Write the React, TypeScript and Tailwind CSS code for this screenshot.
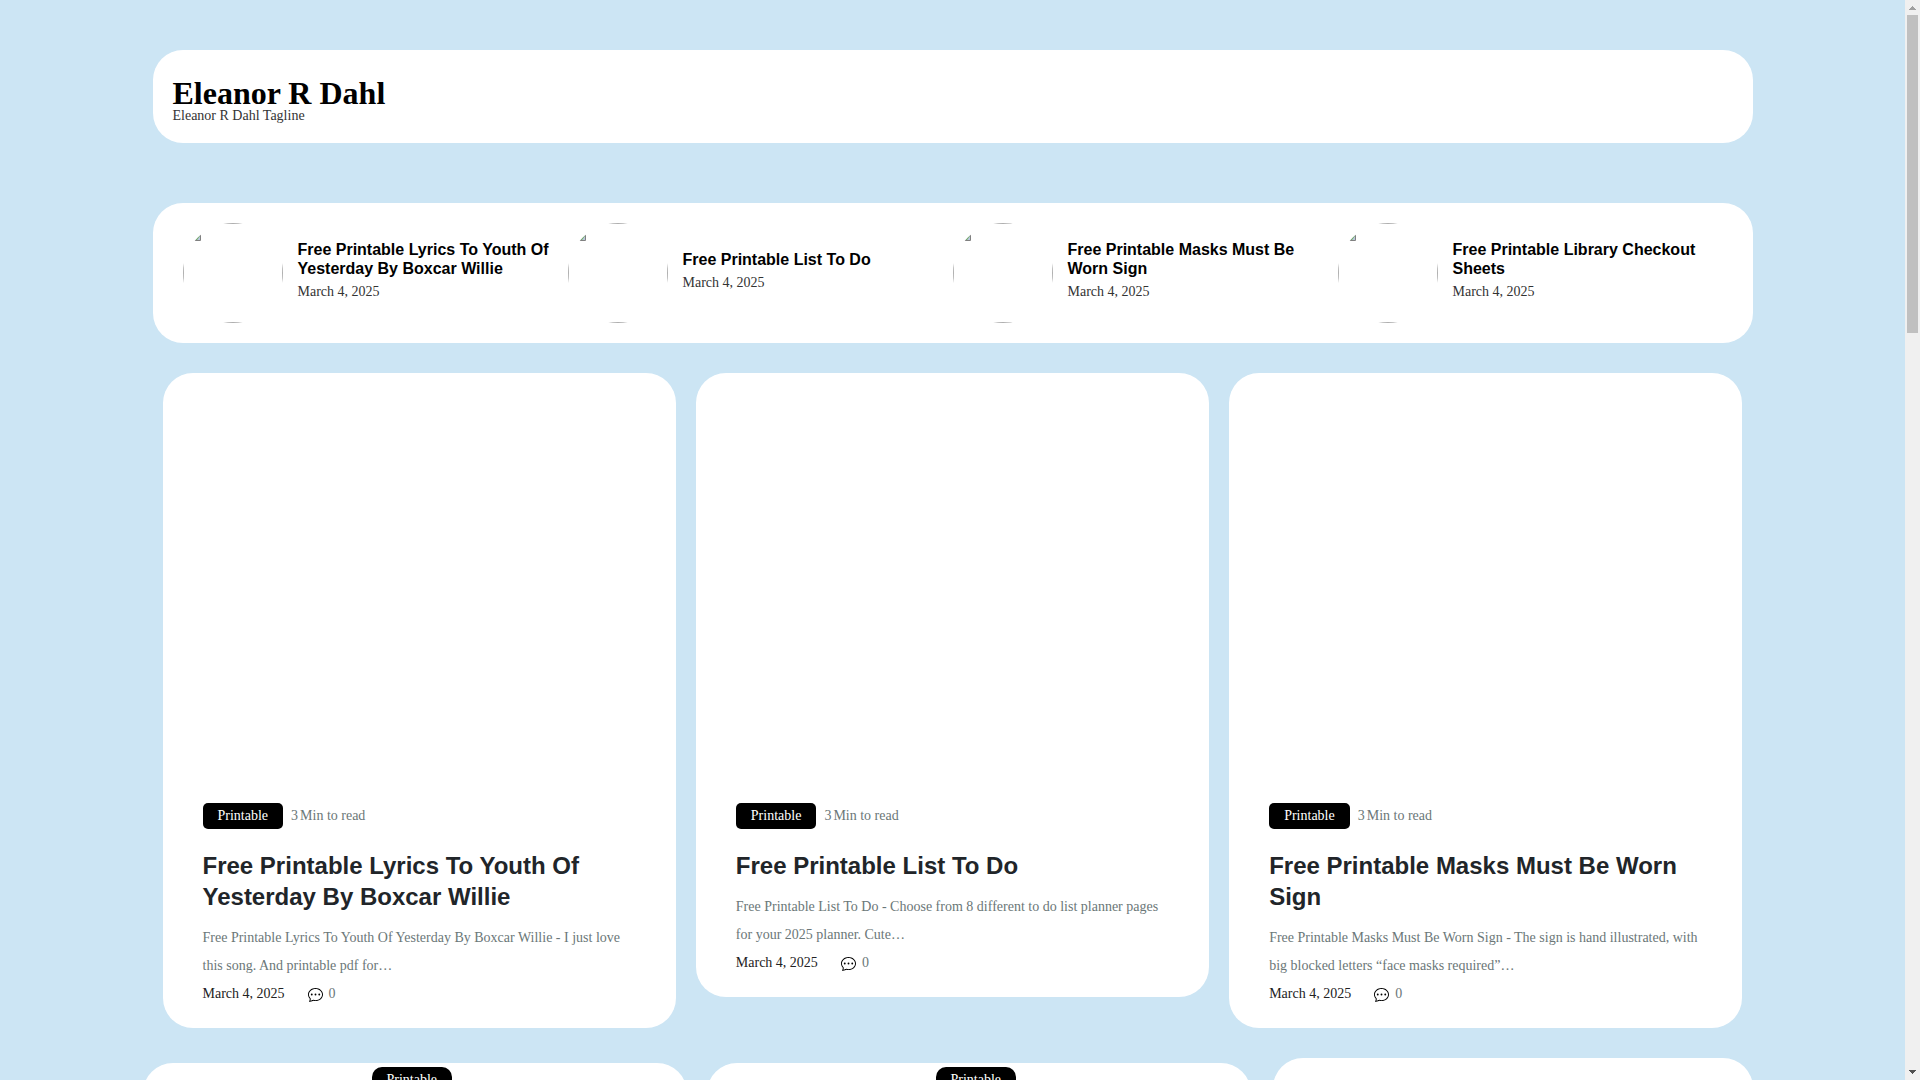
import { BsChatDots } from "react-icons/bs";

interface Post {
  title: string;
  excerpt: string;
}

const DATE = "March 4, 2025";

const recent = [
  "Free Printable Lyrics To Youth Of Yesterday By Boxcar Willie",
  "Free Printable List To Do",
  "Free Printable Masks Must Be Worn Sign",
  "Free Printable Library Checkout Sheets",
];

const posts: Post[] = [
  {
    title: "Free Printable Lyrics To Youth Of Yesterday By Boxcar Willie",
    excerpt:
      "Free Printable Lyrics To Youth Of Yesterday By Boxcar Willie - I just love this song. And printable pdf for…",
  },
  {
    title: "Free Printable List To Do",
    excerpt:
      "Free Printable List To Do - Choose from 8 different to do list planner pages for your 2025 planner. Cute…",
  },
  {
    title: "Free Printable Masks Must Be Worn Sign",
    excerpt:
      "Free Printable Masks Must Be Worn Sign - The sign is hand illustrated, with big blocked letters “face masks required”…",
  },
];

export default function App() {
  return (
    <div className="flex h-screen overflow-hidden bg-[#cce5f4] font-['Liberation_Serif',serif] text-sm">
      <div className="min-w-0 flex-1 overflow-hidden">
        <div className="mx-auto w-full max-w-[1600px] pt-[50px]">
          <header className="rounded-[30px] bg-white px-5 pt-[27px] pb-5">
            <h1 className="text-[32px] leading-8 font-bold text-black">
              <a href="#">Eleanor R Dahl</a>
            </h1>
            <p className="leading-[14px] text-[#333333]">Eleanor R Dahl Tagline</p>
          </header>

          <section className="mt-[60px] grid grid-cols-4 rounded-[30px] bg-white px-[30px] py-5">
            {recent.map((title) => (
              <RecentPost key={title} title={title} />
            ))}
          </section>

          <section className="mt-[30px] grid grid-cols-3 items-start gap-5 px-[10px]">
            {posts.map((post) => (
              <PostCard key={post.title} post={post} />
            ))}
          </section>

          <div className="mt-[30px] flex items-start gap-[22px]">
            <div className="-ml-[10px] grid min-w-0 flex-1 grid-cols-2 gap-5 pt-[5px]">
              <SlideCard />
              <SlideCard />
            </div>
            <aside className="h-[600px] w-[30%] rounded-[30px] bg-white" />
          </div>
        </div>
      </div>
      <Scrollbar />
    </div>
  );
}

function RecentPost({ title }: { title: string }) {
  return (
    <article className="flex items-center gap-[15px]">
      <Thumbnail />
      <div className="min-w-0 flex-1">
        <h2 className="font-['Liberation_Sans',sans-serif] text-base leading-[19px] font-bold text-black">
          <a href="#">{title}</a>
        </h2>
        <p className="leading-7 text-[#333333]">{DATE}</p>
      </div>
    </article>
  );
}

// Square outline clipped to a circle, with the missing-picture icon in its corner
function Thumbnail() {
  return (
    <div className="size-[100px] shrink-0 overflow-hidden rounded-full">
      <div className="size-full border border-[#b0b0b0] p-px">
        <svg width="16" height="16" viewBox="0 0 16 16" aria-hidden="true">
          <path d="M1 1h10l4 4v10H1z" fill="#b9c6dc" />
          <path d="M2 15l7-5 2 1 4-2v2l-3 4z" fill="#6fa860" />
          <path d="M15.500 5v10.500H1" fill="none" stroke="#808080" />
        </svg>
      </div>
    </div>
  );
}

function PostCard({ post }: { post: Post }) {
  return (
    <article className="rounded-[30px] bg-white px-10 pb-5">
      <div className="h-[430px]" />
      <div className="flex items-center gap-2">
        <a href="#" className="rounded-[5px] bg-black px-[15px] leading-[26px] text-white">
          Printable
        </a>
        <span className="flex gap-[2px] leading-[26px] text-[#6b7778]">
          <span>3</span>
          <span>Min to read</span>
        </span>
      </div>
      <h2 className="mt-[21px] font-['Liberation_Sans',sans-serif] text-2xl leading-[31px] font-bold text-[#212529]">
        <a href="#">{post.title}</a>
      </h2>
      <p className="mt-3 leading-7 text-[#6b7778]">{post.excerpt}</p>
      <div className="flex items-center leading-7">
        <a href="#" className="text-[#222222]">
          {DATE}
        </a>
        <a href="#" className="ml-[23px] flex items-center gap-[6px] text-[#6b7778]">
          <BsChatDots size={15} className="text-black" />
          0
        </a>
      </div>
    </article>
  );
}

function SlideCard() {
  return (
    <article className="h-[600px] rounded-[30px] bg-white pt-1 pl-[229px]">
      <a href="#" className="inline-block rounded-[10px] bg-black px-[15px] leading-[26px] text-white">
        Printable
      </a>
    </article>
  );
}

function Scrollbar() {
  return (
    <div className="flex w-[15px] shrink-0 flex-col items-center bg-[#f0f0f0]" aria-hidden="true">
      <svg width="15" height="15" viewBox="0 0 15 15" shapeRendering="crispEdges">
        <path d="M4 10L7.500 6L11 10z" fill="#a0a0a0" />
      </svg>
      <div className="h-[318px] w-[11px] bg-[#c0c0c0]" />
      <svg className="mt-auto" width="15" height="15" viewBox="0 0 15 15" shapeRendering="crispEdges">
        <path d="M4 5L7.500 9L11 5z" fill="#505050" />
      </svg>
    </div>
  );
}
